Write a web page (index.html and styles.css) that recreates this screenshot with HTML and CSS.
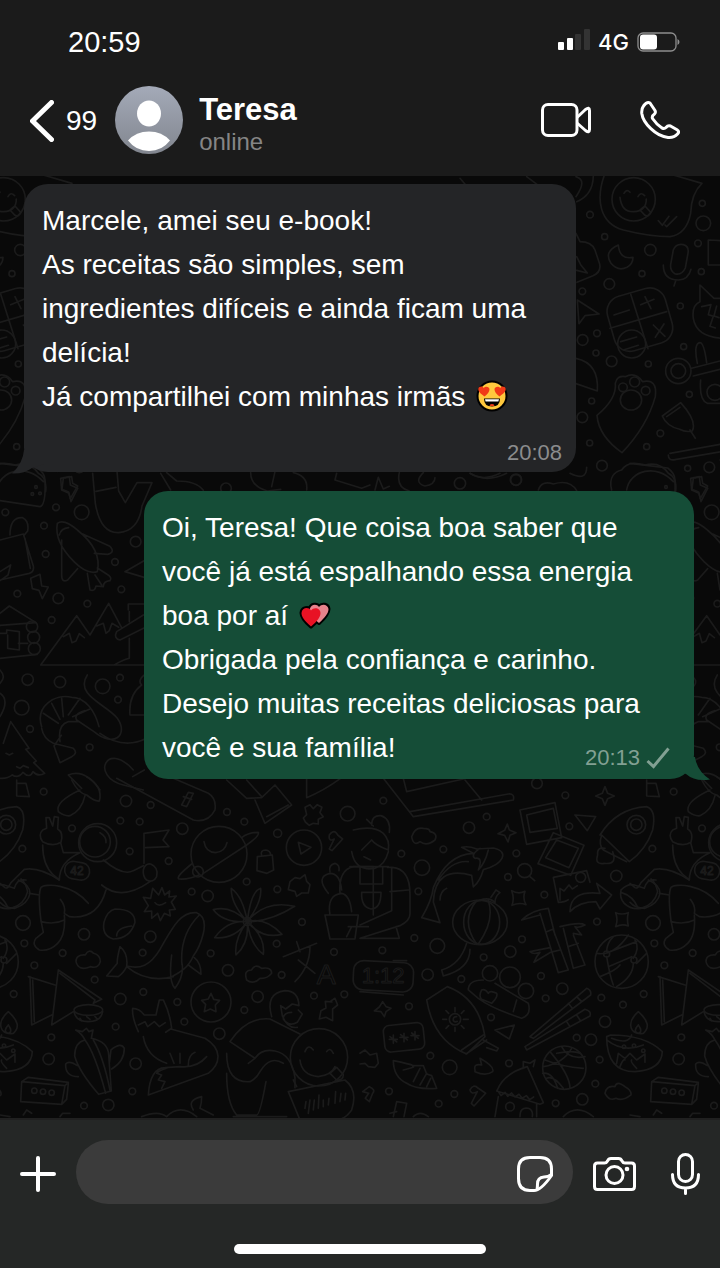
FILE: index.html
```
<!DOCTYPE html>
<html lang="pt-BR">

<head>
    <meta charset="UTF-8">
    <meta name="viewport" content="width=device-width, initial-scale=1.0">
    <title>Teresa</title>
    <link rel="stylesheet" href="styles.css">
</head>

<body>
    <header class="header">
        <div class="status-bar">
            <time class="clock">20:59</time>
            <div class="status-icons">
                <svg class="signal" width="32" height="22" viewBox="0 0 32 22">
                    <rect x="0" y="13" width="6" height="8" rx="1" fill="#fff"/>
                    <rect x="9" y="9" width="6" height="12" rx="1" fill="#fff"/>
                    <rect x="17" y="5" width="6" height="16" rx="1" fill="#333"/>
                    <rect x="26" y="0" width="6" height="21" rx="1" fill="#333"/>
                </svg>
                <span class="network">4G</span>
                <svg width="43" height="20" viewBox="0 0 43 20">
                    <rect x="1" y="1" width="38" height="18" rx="5" fill="none" stroke="#8e8e8e" stroke-width="1.3"/>
                    <rect x="3" y="2.5" width="17" height="15" rx="3" fill="#fff"/>
                    <path d="M40.5 7q2 1 2 3t-2 3z" fill="#8e8e8e"/>
                </svg>
            </div>
        </div>
        <div class="contact-bar">
            <a class="back" href="#" aria-label="Voltar, 99 conversas">
                <svg width="24" height="42" viewBox="0 0 24 42">
                    <path d="M21.5 2.5 2.5 21l19 18.500" fill="none" stroke="#fff" stroke-width="5" stroke-linecap="round" stroke-linejoin="round"/>
                </svg>
                <span>99</span>
            </a>
            <svg class="avatar" viewBox="0 0 68 68">
                <defs>
                    <linearGradient id="avatar-bg" x1="0" y1="0" x2="0" y2="1">
                        <stop offset="0" stop-color="#a4aab8"/>
                        <stop offset="1" stop-color="#82868f"/>
                    </linearGradient>
                </defs>
                <circle cx="34" cy="34" r="34" fill="url(#avatar-bg)"/>
                <ellipse cx="34" cy="27.500" rx="12" ry="13" fill="#fff"/>
                <path d="M13 54.500Q21 45.500 34 45.500t21 9Q47 65 34 65t-21-10.500z" fill="#fff"/>
            </svg>
            <div class="contact">
                <h1>Teresa</h1>
                <p>online</p>
            </div>
            <button class="icon-btn" aria-label="Chamada de vídeo">
                <svg width="50" height="34" viewBox="0 0 50 34" fill="none" stroke="#fff" stroke-width="3" stroke-linejoin="round">
                    <rect x="1.500" y="1.500" width="34.500" height="31" rx="5.500"/>
                    <path d="M36 14.500 44.500 6.500q4-3 4 1v19q0 4-4 1L36 20"/>
                </svg>
            </button>
            <button class="icon-btn" aria-label="Ligar">
                <svg width="40" height="40" viewBox="0 0 40 40" fill="none" stroke="#fff" stroke-width="3" stroke-linejoin="round">
                    <path d="M3.500 6Q7 1.200 10 3l5 7.500q1 2-.5 3.500-3 2-2 4.500 4 6 9.500 9.500 2.500 1 4-.5 2-2.500 4.500-1.500l6.500 3.800q3 2 .5 4.200-3.500 4-9.500 3.500C16 36.500 3 23 1.800 13.500 1.400 9.500 2.200 7.700 3.500 6z"/>
                </svg>
            </button>
        </div>
    </header>

    <main class="chat">
        <svg class="wallpaper" viewBox="0 0 720 942" preserveAspectRatio="xMidYMin slice" aria-hidden="true">
            <defs>
                <g id="doodles">
                    <!-- top: smiley bubble, calculator, paw, microphone, cat -->
                    <g transform="translate(460 -6) scale(.3333)">
                        <circle cx="521" cy="88" r="65"/>
                        <path d="M480 82q5 45 42 43t37-38M492 70q8-15 18-3M534 80q8-16 20-3M540 120l15-12 18 20q-8 14-18 8zM435 10C405 90 420 160 490 180q80 20 140 20 50-8 62-70 2-60 34-90L640 15M595 152l12 14 20-27M615 165l5 5 30-30"/>
                        <path d="M350 95q50-20 50-80M348 20q35 10 0 60"/>
                        <path d="M475 225q-45 20-22 55 20 25 48 12 18-10 18-30-40 8-44-37zM640 240q8-20 30-16 18 5 14 26l-8 44q-10 22-30 18-16-8-14-28zM610 285q0 45 45 45 30 0 38-32M648 330l-6 18"/>
                        <path d="M348 190l12 25q35 0 45 25l14 42q5 25-20 35l-48 20M350 260l12 24 20 25-32-8M352 390l65 42-42 5-18 24z"/>
                        <rect x="450" y="364" width="180" height="170" rx="48" transform="rotate(-16 540 450)"/>
                        <path d="M512 372l52 164M450 475l170-50M462 435l46-15M555 380l18 36M542 404l40-16M580 465l35 34M612 462l-26 40"/>
                        <circle cx="515" cy="522" r="42"/>
                        <path d="M482 515l48-14M490 540l45-14M348 565q70 15 64 98l-64-22"/>
                        <path d="M466 640q5-25 30-20 30-15 52 15 45-10 38 45-25 90-100 168-70-50-75-112 60-50 55-96z"/>
                        <circle cx="489" cy="652" r="13"/><circle cx="524" cy="636" r="15"/><circle cx="557" cy="662" r="13"/><ellipse cx="513" cy="690" rx="32" ry="30"/>
                        <circle cx="655" cy="603" r="38"/><circle cx="655" cy="603" r="22"/>
                        <path d="M695 595l85-22M700 618l80-20M712 580q-12-60 8-62 12 0 20 60M722 630q-5 60 20 70h38"/>
                        <circle cx="765" cy="667" r="24"/>
                        <path d="M607 738l55-40q50 55 35 85-20 5-38-5-40-10-52-40zM620 740l40-28M690 780l16 25M625 855q0 18 20 14l140-24M630 850l150-27"/>
                        <path d="M455 960c-10-40 10-55 30-60 20-28 50-20 70-15 40-10 60 10 70 25 20 10 25 30 22 55M500 960c10-60 90-80 140-25M330 910q50 25 50-18M235 960q10-30 45-18 50-15 70 20M700 925l25-5 3 20 15 8-22 38-5-20-20-8z"/>
                        <path d="M720 345l42 40h50l35-42 8 70q15 80-55 92-90 0-100-60-5-40 20-50zM725 410l28-6-8 30 15 5-10 30 16 5M770 408l-8 30 15 5M745 210q80 0 75 30v45h-75z"/>
                        <path d="M780 870l20 0M0 25l30 35M200 20l40 30M30 910q40 25 90 0"/>
                        <circle cx="571" cy="240" r="17"/><circle cx="448" cy="342" r="16"/><circle cx="730" cy="160" r="22"/><circle cx="368" cy="510" r="16"/><circle cx="455" cy="574" r="16"/><circle cx="367" cy="742" r="16"/><circle cx="426" cy="887" r="16"/><circle cx="168" cy="930" r="16"/><circle cx="748" cy="892" r="16"/>
                        <circle cx="390" cy="134" r="10"/><circle cx="434" cy="200" r="9"/><circle cx="546" cy="311" r="9"/><circle cx="367" cy="364" r="10"/><circle cx="411" cy="490" r="10"/><circle cx="408" cy="549" r="9"/><circle cx="565" cy="582" r="9"/><circle cx="661" cy="408" r="9"/><circle cx="714" cy="220" r="10"/><circle cx="727" cy="100" r="9"/><circle cx="724" cy="305" r="9"/><circle cx="671" cy="530" r="9"/><circle cx="395" cy="693" r="9"/><circle cx="389" cy="819" r="9"/><circle cx="601" cy="790" r="10"/><circle cx="560" cy="830" r="9"/><circle cx="688" cy="673" r="9"/><circle cx="683" cy="895" r="9"/>
                    </g>
                    <!-- strip between the messages -->
                    <g transform="translate(130 204) scale(.3333)">
                        <path d="M92 280l30 50M110 278l30 25q60 0 80 28M362 278q0 40 50 55l40-5M435 275l-10 45M490 278q45 10 40 52M620 280l-5 20 80 25 25-10M735 330l10-38 15 35 18-8M808 278q-10 45 30 55M880 278q-30 30 5 40 30-5 30-25M1020 280q50 30 110 0"/>
                        <circle cx="288" cy="325" r="16"/><circle cx="990" cy="310" r="17"/><circle cx="1158" cy="299" r="17"/>
                    </g>
                    <!-- left: penguin, cabin, mountains, shrimp, tree -->
                    <g transform="translate(0 304) scale(.3333)">
                        <path d="M0 62l120 18q18-5 15-80 0-20-22-36L80-40 0-50M182-5l26-5 3 25 22 10-20 40-6-25-22-10zM278-20l8 90q15 90 70 88 60-5 70-80l30-70-45 0-35 60-20-35-5-60M288 34l60-12"/>
                        <circle cx="108" cy="21" r="4"/><circle cx="97" cy="42" r="4"/><circle cx="120" cy="40" r="4"/>
                        <path d="M172 130q20-15 60 20 75 60 60 125-30 10-70-30-60-60-50-115zM178 165q5-20 28-22M185 180v105q0 25 18 15l30-34M248 162l80 36q20 18-5 25l-40-3M262 280l8 50q15 5 18-12l22 2q0-16 20-18 8-10-10-20l-28-18M285 285l20 30"/>
                        <path d="M0 180l70-18 30 96q3 18-12 22L0 300M30 165q0-55 38-52 20 10 15 40l-10 12M75 175l16 90M0 275l32-20-8 30L0 302M92 295l28-12 5 35 20 3-18 35-10-25-20-5zM0 400l28-22 80 50-108 8M0 460h20v-10l38 5v55l-35-5v-40M0 535l112-12M55 490h28"/>
                        <circle cx="96" cy="440" r="17"/><circle cx="101" cy="472" r="18"/><circle cx="103" cy="506" r="18"/>
                        <path d="M122 555l108-148 40 58 56-95 40 75M122 555h330M190 470l18-10 8 28 12-5 10-22 15 12M290 438l20-8 8 30 10-8 8-22 20 12M430 405l-80 50q-10 20 10 25l90-45M385 390v-18h60M388 395v30M388 475v60q-20 5-45 20M375 275l70-40M375 275l60 18"/>
                        <path d="M262 585c-40 60 60 90 90 130 35 50-10 90-70 40L230 720q-10-18 25-28M125 740c-20-60 40-100 90-88 40 0 70 40 82 88M125 745q5 30 35 45l60 15q15 15-5 25l-35 18-18-50 22-32M180 785q-8-50 25-60h30M185 655l5 55M155 670l25 48M130 700l45 30M240 655l-35 50M268 688l-50 22M300 760q70 50 140 15M205 885q50-20 95 45M205 885l40 40M400 870c-80-90-130 20-30 45l60 15M398 890l35-20"/>
                        <path d="M10 790l22-65 55 80-10 3 32 35-8 5 33 32q-20 12-35-5-10 22-30 2-15 20-32 8-15 12-37 10M18 820l10 5 10-5M50 860l10 5 10-8 15 6M440 580q-30 20-15 35-40 30-35 90h55M0 570q20 20 0 40M0 640q30 20 0 70"/>
                        <circle cx="245" cy="97" r="22"/><circle cx="407" cy="185" r="16"/><circle cx="175" cy="355" r="16"/><circle cx="83" cy="599" r="17"/><circle cx="180" cy="606" r="17"/><circle cx="308" cy="619" r="22"/><circle cx="65" cy="683" r="22"/>
                        <circle cx="16" cy="97" r="10"/><circle cx="168" cy="82" r="10"/><circle cx="132" cy="137" r="10"/><circle cx="137" cy="222" r="10"/><circle cx="345" cy="246" r="10"/><circle cx="364" cy="328" r="10"/><circle cx="262" cy="371" r="10"/><circle cx="52" cy="341" r="10"/><circle cx="155" cy="420" r="10"/><circle cx="360" cy="593" r="10"/><circle cx="354" cy="659" r="10"/><circle cx="90" cy="747" r="10"/><circle cx="269" cy="802" r="10"/>
                    </g>
                    <!-- bottom left: astronaut, planet, whale, fox, hugging friends -->
                    <g transform="translate(0 604) scale(.3333)">
                        <path d="M240 30q-75 35-65 65 20 15 35 12 35-15 45-60M215 0q20 40 45 45 25 20 38 18Q310 20 260-10M50 0v48l38 2L78 10H50"/>
                        <circle cx="293" cy="188" r="57"/><circle cx="285" cy="185" r="46"/><path d="M300 158q20 12 18 30"/>
                        <path d="M128 185q-15-20 0-35l12-5-2-32 10 0 10 25 5-28 12 2-2 35q18 10 10 40-25 15-55-2zM128 195q0 60 32 90l18 15q0-55 62-82h-50l-8-30M310 240q60 50 90 32l30-15M432 160v90M432 160l75-10-18 30 18 20-70 3M305 315q60 50 145-10M430 270q5-20 22-18 25 10 18 38-10 20-30 10-12-10-10-30zM318 330q-25 90-110 80l-15-10q5-20-12-42M265 370c-50-60-130-60-142-48q-10 20 0 100"/>
                        <path d="M123 425q40 10 70-5M193 405q5 60-20 85-25 25-55 20-25-15-10-35l22-18-7-35M178 300q-60-40-105-32l-40 40q-10 20-18 15L0 310M88 340l30 5M55 300q35 15 35 40-5 30-45 45-30 0-45-18"/>
                        <rect x="194" y="246" width="75" height="52" rx="25" transform="rotate(10 230 272)"/>
                        <text x="211" y="284" font-size="36">42</text>
                        <path d="M350-5l230 125q45 10 65-30 5-35-20-50L520-5M545 75l20-38 15 3-20 40zM550 50l25 8M680 0l60 55 45-2 40-38 50 60-80 55-30-70M800 110l65-35M740 0l45 50M920-5v58q50-20 105-60"/>
                        <circle cx="657" cy="223" r="84"/><path d="M612 185q5 32 35 33 28-2 34-30M610 280l130-85q40-28 35-38-30 0-50 16M575 252q-50 40-38 45 30 2 60-12"/><circle cx="594" cy="275" r="16"/>
                        <circle cx="912" cy="203" r="53"/><path d="M895 187l38 15-30 20zM772 230l45-5 4 45-20 10-30-8zM785 226q-5-15 12-16 14 2 15 14M915 82l15-8 10 12 12-12 14 8-6 16 10 12-15 8 0 14-15-2-12 6-12-10-6-12 10-10z"/>
                        <path d="M988 165q15-20 25 0l15 12-32 35-8-5 15-30q-18 10-15-12z"/>
                        <path d="M458 325l18 20 10-22 8 22 15-12-2 18 22-3-15 18 12 22-18 2 3 18-18-8-12 22-8-22-18 15v-22l-22 2 12-18-15-25 22 3zM465 368q10 15 32 0M345 387q60 0 60 40-15 50-65 50-35-10-28-50 10-35 33-40zM350 468q0-25 45-30"/>
                        <path d="M742 425q-50-55-48-100 35 25 48 100zM742 425q45-60 40-100-30 10-40 100zM742 425q70 0 142-46-90-20-142 46zM742 425q55-15 104 38-60 15-104-38zM742 425q55 45 48 98-40-30-48-98zM742 425q-40 50-34 100 40-35 34-100zM742 425q-60-5-98 48 60 5 98-48zM742 425q-50-50-102-36 30 40 102 36z"/><circle cx="742" cy="425" r="12"/>
                        <path d="M380 558c40 10 70 0 100-50 35-60 60-115 110-110 50 20 5 110-10 130-15 35-40 50-65 62M380 560q60 50 140 30M598 405q-60 60-52 150M380 560q5-40-20-60-10 40-8 50l-32 38 35 2q15-10 25-30M515 525q-10 80 10 100 30-40 20-80M565 555l38 28q0-35-20-50M228 545q0-22 28-20 10-20 25-5 20 5 20 25-5 22-30 15-35 15-43-15zM740 600q-10-30 15-30 10-20 30-5 30-5 30 15-15 18-35 15-20 20-40 5z"/>
                        <path d="M85 590l80 25M90 590l5 145 60-30M98 600l5 125M175 570l130 88-25 12M175 570l-20 165 65-40M180 580l105 80-5 10"/><ellipse cx="265" cy="690" rx="43" ry="16"/><path d="M222 695q5 30 43 30t43-30M240 715l5 8M260 710l10 8M285 710l8 8"/>
                        <circle cx="633" cy="666" r="60"/><path d="M633 640l8 18 18 3-13 14 2 20-17-8-18 8 4-22-12-12 20-4z"/>
                        <path d="M415 755q-20-45-17-70 20 0 35 20l35 0 10-45 12 0q20 40 25 85l-18 12M515 748l100 27c50 30 50 75 10 105l-180 65q5-80 50-82l45-3q50 5 80-30M430 770q10 60 70 80M415 735l20-10 8 15 20-15 15 15 18-12M500 865q-20 5-30 15l15 5-10 15 20 5-10 20M510 820l12 30M540 820v30M565 855q0-30 20-38"/>
                        <path d="M255 780q-10-20-28-30l20 5 12-10 8 10 12-5-5 25q50 10 52 50l8 108-38 10q-60-70-72-115 0-40 30-48M255 780q30 40 62 160M280 780q30 50 50 150M328 850l5-40q30-25 40-5 0 40-38 62M235 890q-40 0-38-38 10-12 35 5M65 905l130 12 10-10-120-15-20 13-3 60 123 8 10-56M205 910l-5 48-15 15"/>
                        <circle cx="103" cy="932" r="8"/><circle cx="129" cy="935" r="8"/><circle cx="155" cy="938" r="8"/>
                        <path d="M815 710q-20-70 40-78 40 0 42 45l-20-5-20 15-15-10 5 30q15 40 45 35M895 690l12 12-15 25q-25 15-42-10 0-20 25-20M690 785q50-75 120-68l90 45M690 785l75 50q20-30 60-22 50 10 60 80v30M765 835q-20 15-20 15M680 820q0 90 70 85 20-10 30-30 30-50 70-25M680 880q0 90 30 125l60 0q10 0 28-100M700 1010h160"/>
                        <circle cx="957" cy="832" r="86"/><path d="M900 840q5 45 55 50 40-5 50-30M915 815q10-25 25-5M980 815q10-15 20 5M990 880l20-18 20 22q0 18-20 16zM865 935l170-35q40 30 20 90-20 30-50 30H900zM890 920l-10-20M915 985l3-20M925 1000l5-40M940 990l3-30M955 985l2-40M970 980v-20M985 975l2-20M1005 970l2-35M1020 965l3-25M1035 960l2-20"/>
                        <path d="M870 305l15-12 15 3 15-12 5 20 10 10-5 25-20 0-15 10-5-15-20-5zM990 405q-10-60 35-65 25 5 30 55M1020 340q-5-70 40-80h60v145M985 340q-40-50 5-60 30 0 35 50M990 275q-5-20 15-25 15 5 12 22M975 405h100l-10 72h-75zM1045 440h60M1040 470l15-30M850 530l100-40M890 485l10 30M930 500q0 60-45 105M895 540l50 40"/>
                        <text x="950" y="613" font-size="85">A</text>
                        <path d="M990 665l15-10 8 20-15 12 0 35-20-10-20 5 5-25 15-8-2-20 20 2M580 990q-20-30 25-40 0 20-5 35l40 20M425 1010q50-20 75 0M500 1010q40-40 90 0M0 1005l30 5M70 1005l10-15 15 10M180 1010l8-10 22 0"/>
                        <circle cx="378" cy="63" r="17"/><circle cx="547" cy="146" r="17"/><circle cx="1043" cy="101" r="22"/><circle cx="623" cy="348" r="17"/><circle cx="69" cy="429" r="22"/><circle cx="252" cy="463" r="17"/><circle cx="451" cy="470" r="17"/><circle cx="684" cy="571" r="17"/><circle cx="361" cy="657" r="17"/><circle cx="773" cy="650" r="17"/><circle cx="658" cy="761" r="17"/><circle cx="146" cy="837" r="17"/><circle cx="407" cy="851" r="17"/><circle cx="325" cy="975" r="17"/>
                        <circle cx="131" cy="35" r="10"/><circle cx="452" cy="75" r="10"/><circle cx="361" cy="122" r="10"/><circle cx="419" cy="125" r="10"/><circle cx="216" cy="145" r="10"/><circle cx="681" cy="96" r="10"/><circle cx="733" cy="125" r="10"/><circle cx="389" cy="214" r="10"/><circle cx="506" cy="243" r="10"/><circle cx="67" cy="206" r="10"/><circle cx="575" cy="335" r="10"/><circle cx="740" cy="305" r="10"/><circle cx="832" cy="328" r="10"/><circle cx="833" cy="160" r="12"/><circle cx="906" cy="426" r="10"/><circle cx="73" cy="490" r="10"/><circle cx="188" cy="519" r="10"/><circle cx="103" cy="556" r="10"/><circle cx="428" cy="518" r="10"/><circle cx="632" cy="520" r="10"/><circle cx="830" cy="491" r="10"/><circle cx="845" cy="585" r="10"/><circle cx="284" cy="599" r="10"/><circle cx="41" cy="642" r="10"/><circle cx="430" cy="636" r="10"/><circle cx="532" cy="666" r="10"/><circle cx="553" cy="725" r="10"/><circle cx="733" cy="690" r="10"/><circle cx="347" cy="740" r="10"/><circle cx="154" cy="772" r="10"/><circle cx="397" cy="934" r="10"/><circle cx="252" cy="977" r="10"/><circle cx="942" cy="647" r="10"/><circle cx="1033" cy="643" r="10"/><circle cx="1002" cy="516" r="10"/>
                    </g>
                    <!-- bottom right: gardener, dolphin, pumpkin, rocket, globe, lamp -->
                    <g transform="translate(360 604) scale(.3333)">
                        <path d="M70-5l90 115 300-50q5-20-15-18l-295 53M130-5l10 40 170-38M315 0l50 60M480 90l105-22 20 105-105 20zM500 105l80-20 12 60-82 12zM580 158l92 38-40 90-98-35zM590 180l65 25-28 58-70-30zM645 105l62 5-25 42zM735 20l8 20 20 8-20 8-8 20-8-20-20-8 20-8zM442 132l6 18 20 8-18 8-6 20-10-20-20-5 20-10z"/>
                        <path d="M720 165q50-80 140-85 30 10 18 70-20 60-70 95L725 165M725 165q-10 30 5 45l70 35M735 205q-25-5-22 20-10 30 20 25 40 5 25-35"/><circle cx="829" cy="134" r="28"/><circle cx="829" cy="134" r="17"/>
                        <path d="M35 135q0-30 28-28 30 10 25 50M20 118l20 20M-20 150q60-15 90 10 20 20 15 50-40-15-50-30l-30 30M85 215q-10 40-40 50-60 10-70-50M12 230l20 10M0 262v50h68v-50M82 262h15q53 5 53 80v60q0 20-30 35L0 475h118l-10-35M-30 260h115M95 262v130L0 435M90 335l55-5M5 337h58q0 50-30 50-30-5-28-50M155 170q10-30 35-25 20 0 20 10 25 5 15 25-25 20-45 5-20 15-25-15z"/>
                        <path d="M340 220l-35-18q20-5 45 5l50-3c50 10 30 50-30 65q-10 35-30 52l-5-35q-110-30-115 80l20 62-55-15q30-50 35-90 40-100 120-103M360 205q-30 20-15 30 25-5 10 35 20-20 30-60M235 300q40-60 90-55M240 360q0-25 20-35"/>
                        <ellipse cx="360" cy="427" rx="82" ry="67"/><ellipse cx="365" cy="427" rx="54" ry="66"/><path d="M350 362q-50 60 0 130M385 362q20 60-30 130M360 360q30-10 45 8 0-20 15-30l-12-8-15 22M320 490q-20 65-75 80l5 18q80-20 80-80M455 332q20 12 40 2-8 20 3 40-20-8-42 2 8-20-1-44zM767 398q18 8 38 0-5 20 0 40-18-8-38 2 8-20 0-42zM510 290l14 12"/>
                        <circle cx="494" cy="272" r="21"/>
                        <path d="M580 292l100-20 10 35M580 292l15 75q20 0 30-8M600 360l0-35 12 8 15-18 10 12 15-10M630 395q0-65 90-55l-10-30 45 35-35 42-12-22q-50 0-78 30zM485 420q30-30 80-35l20 80M540 400l55 178 30-8-45-120M485 420l55-15M600 440q60-15 75-5-20 10-30 5l20 25-25-5M610 445l30 120 35-10-35-90M560 455l20-8M510 515l60-12M510 515q10 10 30 2-10 10-18 30l50-30M580 515l20-5M625 500l30-10"/>
                        <circle cx="785" cy="545" r="80"/><circle cx="740" cy="522" r="9"/><circle cx="822" cy="540" r="9"/><path d="M710 520q50 10 95-55M750 515l80-30M820 535q20-30 5-55M740 530q10 60 20 85M745 560l70-30M830 550l30-30M820 550q0 40-50 70M720 590q50-20 60-35M760 470q-20 20-20 45"/>
                        <rect x="-20" y="545" width="180" height="88" rx="30" transform="rotate(3 70 590)"/><path d="M0 635l130 10M100 542h40"/>
                        <text x="5" y="610" font-size="66">1:12</text>
                        <circle cx="390" cy="580" r="23"/><circle cx="450" cy="592" r="31"/><circle cx="498" cy="633" r="23"/><path d="M370 600q-45 0-45 30l30 25q40 30 130 60 30-10 20-45l-100-60M365 630q-10 20 0 28l30 12q20-20 15-30-20-10-25 0-10-15-20-10zM470 660l-10 35"/>
                        <path d="M200 660l62-40q95 35 113 150l-55 52q-100-40-120-162zM305 810l65-45M318 822l62-42M370 780l45 25-5 8-30-10"/><circle cx="285" cy="718" r="17"/><path d="M285 683v12M285 742v12M248 718h12M310 718h15M258 692l8 8M312 692l-8 8M258 745l8-8M312 745l-8-8M290 710q-12 0-10 12 5 6 12 2"/>
                        <rect x="72" y="732" width="120" height="80" rx="18" transform="rotate(-6 132 772)"/>
                        <path d="M68 665l10 15 15 5-15 10-5 15-10-15-20-2 15-12zM100 765v25M88 778h24M90 770l20 16M132 760v25M120 772h24M122 764l20 16M165 755v25M153 767h24M155 759l20 16M405 750l58-15-15 42zM100 842q50 10 60 15l30 0 10 25 15 5 15 38q-60 5-90-15-40-20-40-68zM130 870q40-10 28-10M160 905l20-40M180 915l20-35M200 920l12-25M345 870q-5-20 20-15l-5-20q45 25 38 40-20 15-53 0z"/>
                        <path d="M510 770l170-145q15 5 12 20L520 775zM495 800l180-112q20 5 15 20L500 810zM650 650l15 15M625 670l12 15M650 705l10 15M620 725l8 12"/>
                        <circle cx="613" cy="863" r="65"/><path d="M555 840q50 20 115 25M570 815q60 70 60 110M605 800q20 40 70 30M550 860q60-10 85-55M560 895q20-10 50 30M590 820q50-10 70 0M548 880q30-5 45 45"/>
                        <path d="M835 695q45 40 15 65-35 5-38-25 0-20 23-40zM835 735q-18 20 0 25 15-5 0-25M740 770q0 105 85 105 80-5 82-60-50-50-155-50zM755 775q50 20 60-10M740 780q50 40 110 15M770 850l5-30 20 15 15-15 20 20 25-18 0 25M780 860q10-25 15-20M830 865q-20-20-15-25"/><circle cx="792" cy="800" r="5"/><circle cx="822" cy="797" r="5"/><circle cx="850" cy="812" r="5"/>
                        <path d="M412 930q20-50 90-70l48 108-10 5-130-40zM415 935l8 12 12-10 8 12 12-10 10 12 12-8 10 12 12-8 10 12 12-8M415 950l-10 60M530 970v40M490 865l0-20 20 5 15-10-5 20M480 1010q0-30 25-25 15 5 12 25M735 940q5-25 30-20 5-20 30 0 20 10 18 25-25 20-45 10-20 10-33-15zM330 930q10-20 25-5l22 15-35 38-8-8 18-35q-20 10-22-5zM8 935l20-15q20 10 10 20l-10 25-12-10 10-15zM100 1010l10-45 30 5-8 40M90 1000l20-5M0 820l15-10 15 15 20-5 5 30-10 12-20-2-10-10-15 2M160 1010q20-20 45 0M610 1010q40-40 90 0"/><circle cx="450" cy="980" r="13"/>
                        <circle cx="531" cy="10" r="16"/><circle cx="327" cy="143" r="17"/><circle cx="186" cy="263" r="23"/><circle cx="769" cy="288" r="17"/><circle cx="662" cy="292" r="15"/><circle cx="232" cy="498" r="22"/><circle cx="451" cy="515" r="17"/><circle cx="203" cy="584" r="17"/><circle cx="607" cy="626" r="17"/><circle cx="735" cy="725" r="17"/><circle cx="693" cy="779" r="17"/><circle cx="269" cy="862" r="22"/><circle cx="667" cy="958" r="17"/>
                        <circle cx="70" cy="62" r="10"/><circle cx="380" cy="110" r="10"/><circle cx="616" cy="46" r="10"/><circle cx="628" cy="139" r="10"/><circle cx="250" cy="208" r="10"/><circle cx="124" cy="221" r="10"/><circle cx="469" cy="220" r="10"/><circle cx="444" cy="291" r="10"/><circle cx="175" cy="334" r="10"/><circle cx="553" cy="344" r="10"/><circle cx="711" cy="425" r="10"/><circle cx="163" cy="474" r="10"/><circle cx="67" cy="511" r="10"/><circle cx="486" cy="478" r="10"/><circle cx="371" cy="532" r="10"/><circle cx="304" cy="597" r="10"/><circle cx="543" cy="588" r="10"/><circle cx="557" cy="655" r="10"/><circle cx="147" cy="679" r="10"/><circle cx="393" cy="712" r="10"/><circle cx="724" cy="653" r="10"/><circle cx="789" cy="674" r="10"/><circle cx="650" cy="773" r="10"/><circle cx="719" cy="839" r="10"/><circle cx="211" cy="827" r="10"/><circle cx="447" cy="850" r="10"/><circle cx="87" cy="934" r="10"/><circle cx="283" cy="942" r="10"/><circle cx="236" cy="971" r="10"/><circle cx="587" cy="970" r="10"/><circle cx="706" cy="911" r="10"/>
                        <!-- astronaut's trailing foot, cut by the tile edge -->
                        <path d="M783 330q20-20 40-15l30 10q8-30 35-25M783 330q-5 25 10 40 20 20 50 15 40-10 50-50-5-25-20-38M785 338q35 10 50 48"/>
                    </g>
                </g>
            </defs>
            <use href="#doodles" x="-630"/>
            <use href="#doodles"/>
            <use href="#doodles" x="630"/>
        </svg>

        <article class="message received">
            <p>Marcele, amei seu e-book!<br>As receitas são simples, sem ingredientes difíceis e ainda ficam uma delícia!<br>Já compartilhei com minhas irmãs
                <svg class="emoji" viewBox="0 0 32 32" role="img" aria-label="Rosto com olhos de coração">
                    <circle cx="16" cy="16" r="14.500" fill="#ffc83d" stroke="#000" stroke-width="2"/>
                    <path d="M8.500 16.500C5 14 2 11.500 2.300 8.800c.5-2.600 4-3.200 5.300-.9 2-2.200 5.800-1.400 5.900 1.300.1 2.500-2 5-5 7.300z" fill="#f03a17"/>
                    <path d="M23.500 16.500C27 14 30 11.500 29.700 8.800c-.5-2.600-4-3.200-5.300-.9-2-2.200-5.800-1.400-5.900 1.300-.1 2.500 2 5 5 7.300z" fill="#f03a17"/>
                    <path d="M8 18.500h16q0 8-8 8t-8-8z" fill="#000"/>
                    <path d="M9 19.300h14l-.6 2.200H9.600z" fill="#fff"/>
                    <path d="M13.500 25.800q0-1.800 2.500-1.800t2.500 1.800q-2.500.8-5 0z" fill="#f03a17"/>
                </svg>
            </p>
            <div class="meta"><time>20:08</time></div>
            <svg class="tail" width="32" height="24" viewBox="0 0 32 24" aria-hidden="true">
                <path d="M12 0Q11 13 0 23.500 12 24 20 18l12-4V0z" fill="#242527"/>
            </svg>
        </article>

        <article class="message sent">
            <p>Oi, Teresa! Que coisa boa saber que você já está espalhando essa energia boa por aí
                <svg class="emoji" viewBox="0 0 32 32" role="img" aria-label="Dois corações">
                    <g stroke="#000" stroke-width="4" stroke-linejoin="round">
                        <path d="M20 24C14 19 10 14 11 9.500c1-4.500 7-5 9-1.500 3-4 9-2.500 9.500 2 0 4.500-4 9-9.500 14z"/>
                        <path d="M12 27.500C5 21.500 2.500 17.500 2.500 14c.5-5.500 7-6.500 9.500-2.500 3-4 9.500-2.500 9.500 2.500 0 4-3 8-9.500 13.500z"/>
                    </g>
                    <path d="M20 24C14 19 10 14 11 9.500c1-4.500 7-5 9-1.500 3-4 9-2.500 9.500 2 0 4.500-4 9-9.500 14z" fill="#e7838c"/>
                    <path d="M12 27.500C5 21.500 2.500 17.500 2.500 14c.5-5.500 7-6.500 9.500-2.500 3-4 9.500-2.500 9.500 2.500 0 4-3 8-9.500 13.500z" fill="#e81224"/>
                </svg><br>Obrigada pela confiança e carinho.<br>Desejo muitas receitas deliciosas para</p>
            <div class="last-line">
                <p>você e sua família!</p>
                <div class="meta">
                    <time>20:13</time>
                    <svg width="24" height="22" viewBox="0 0 24 22" role="img" aria-label="Enviada">
                        <path d="M1.500 14l6 5.500L22.500 1.500" fill="none" stroke="currentColor" stroke-width="3"/>
                    </svg>
                </div>
            </div>
            <svg class="tail" width="32" height="24" viewBox="0 0 32 24" aria-hidden="true">
                <path d="M17 0Q19 14 32 22.500 17 25 8 17l-8-3V0z" fill="#154d37"/>
            </svg>
        </article>
    </main>

    <footer class="footer">
        <form class="composer">
            <button class="icon-btn" type="button" aria-label="Anexar">
                <svg width="36" height="36" viewBox="0 0 36 36">
                    <path d="M18 2v32M2 18h32" stroke="#fff" stroke-width="4" stroke-linecap="round"/>
                </svg>
            </button>
            <div class="field">
                <input type="text" aria-label="Mensagem">
                <button class="icon-btn" type="button" aria-label="Figurinhas">
                    <svg width="36" height="36" viewBox="0 0 36 36" fill="none" stroke="#fff" stroke-width="3" stroke-linejoin="round">
                        <path d="M34.500 19.500V13Q34.500 1.500 23 1.500H13Q1.500 1.500 1.500 13v9.500Q1.500 34.500 13 34.500h4Q24 34.500 34.500 19.500z"/>
                        <path d="M20 33.500q.5-3 .5-5.500 0-6.500 6.500-7 4.500 0 7.200-2.500"/>
                    </svg>
                </button>
            </div>
            <button class="icon-btn" type="button" aria-label="Câmera">
                <svg width="43" height="34" viewBox="0 0 43 34" fill="none" stroke="#fff" stroke-width="3" stroke-linejoin="round">
                    <path d="M4.500 6h7q2 0 3-2 1-2.500 3.500-2.500h7.500q2.500 0 3.500 2.500 1 2 3 2h6.500q3 0 3 3v20.500q0 3-3 3h-34q-3 0-3-3V9q0-3 3-3z"/>
                    <circle cx="21.500" cy="18" r="8.500"/>
                    <circle cx="34" cy="12" r="2.300" fill="#fff" stroke="none"/>
                </svg>
            </button>
            <button class="icon-btn mic" type="button" aria-label="Gravar áudio">
                <svg width="29" height="42" viewBox="0 0 29 42" fill="none" stroke="#fff" stroke-width="3" stroke-linecap="round">
                    <rect x="7.500" y="1.500" width="14" height="27" rx="7"/>
                    <path d="M1.500 21.500q0 13.500 13 13.500t13-13.500M14.500 35v5.500"/>
                </svg>
            </button>
        </form>
        <div class="home-indicator"></div>
    </footer>
</body>

</html>
```
FILE: styles.css
```
* {
    margin: 0;
    padding: 0;
    box-sizing: border-box;
}

body {
    font-family: "Liberation Sans", Arial, sans-serif;
    background-color: #090909;
    color: #fff;
    min-height: 100vh;
    display: flex;
    flex-direction: column;
}

svg {
    display: block;
    flex-shrink: 0;
}

.header {
    background-color: #1b1b1b;
}

.status-bar {
    display: flex;
    justify-content: space-between;
    align-items: center;
    padding: 20px 40px 0 68px;
    height: 64px;
}

.clock {
    font-size: 29px;
}

.status-icons {
    display: flex;
    align-items: center;
    gap: 8px;
}

.signal {
    margin-bottom: 4px;
}

.network {
    font-family: Inter, sans-serif;
    font-size: 22px;
    font-weight: 500;
}

.contact-bar {
    display: flex;
    align-items: center;
    gap: 16px;
    height: 112px;
    padding: 0 40px 0 30px;
}

.back {
    display: flex;
    align-items: center;
    gap: 12px;
    padding: 2px 2px 0 0;
    color: #fff;
    font-size: 28px;
    text-decoration: none;
}

.avatar {
    width: 68px;
    height: 68px;
}

.contact {
    flex: 1;
    padding-top: 12px;
}

.contact h1 {
    font-size: 31px;
    line-height: 32px;
}

.contact p {
    color: #858585;
    font-size: 24px;
    line-height: 32px;
}

.icon-btn {
    background: none;
    border: none;
    cursor: pointer;
}

.contact-bar .icon-btn + .icon-btn {
    margin-left: 33px;
}

.chat {
    flex: 1;
    position: relative;
    display: flex;
    flex-direction: column;
    gap: 19px;
    padding: 8px 26px 32px 24px;
}

.wallpaper {
    position: absolute;
    top: 0;
    left: 0;
    width: 100%;
    height: 100%;
    fill: none;
    stroke: #1b1b1b;
    stroke-width: 5;
    stroke-linejoin: round;
    stroke-linecap: round;
}

.wallpaper text {
    stroke-width: 3;
}

.message {
    position: relative;
    max-width: 552px;
    border-radius: 24px;
    padding: 15px 18px 9px;
    font-size: 28px;
    line-height: 44px;
}

.received {
    align-self: flex-start;
    padding-bottom: 7px;
    background-color: #242527;
}

.sent {
    align-self: flex-end;
    max-width: 550px;
    background-color: #154d37;
}

.emoji {
    display: inline-block;
    width: 32px;
    height: 32px;
    margin-left: 3px;
    vertical-align: -6px;
}

.meta {
    display: flex;
    align-items: center;
    gap: 6px;
    font-size: 22px;
    line-height: 24px;
}

.received .meta {
    justify-content: flex-end;
    color: #8b8c8d;
    margin: 22px -4px 0 0;
}

/* the time shares the last line of the text */
.last-line {
    display: flex;
    justify-content: space-between;
    align-items: flex-end;
}

.sent .meta {
    padding-right: 6px;
    color: #82a093;
}

.tail {
    position: absolute;
    bottom: -2px;
}

.received .tail {
    left: -12px;
}

.sent .tail {
    right: -16px;
}

.footer {
    background-color: #252726;
    border-top: 2px solid #202020;
    padding: 20px 20px 14px;
}

.composer {
    display: flex;
    align-items: center;
    gap: 20px;
}

.composer .icon-btn {
    padding-top: 4px;
}

.field {
    flex: 1;
    display: flex;
    align-items: center;
    min-width: 0;
    height: 64px;
    padding: 0 20px 0 28px;
    border-radius: 32px;
    background-color: #3b3b3b;
}

.field input {
    flex: 1;
    min-width: 0;
    border: none;
    outline: none;
    background: none;
    color: #fff;
    font-family: inherit;
    font-size: 28px;
}

.mic {
    margin-left: 15px;
}

.home-indicator {
    width: 252px;
    height: 10px;
    margin: 40px auto 0;
    border-radius: 5px;
    background-color: #fff;
}
```
